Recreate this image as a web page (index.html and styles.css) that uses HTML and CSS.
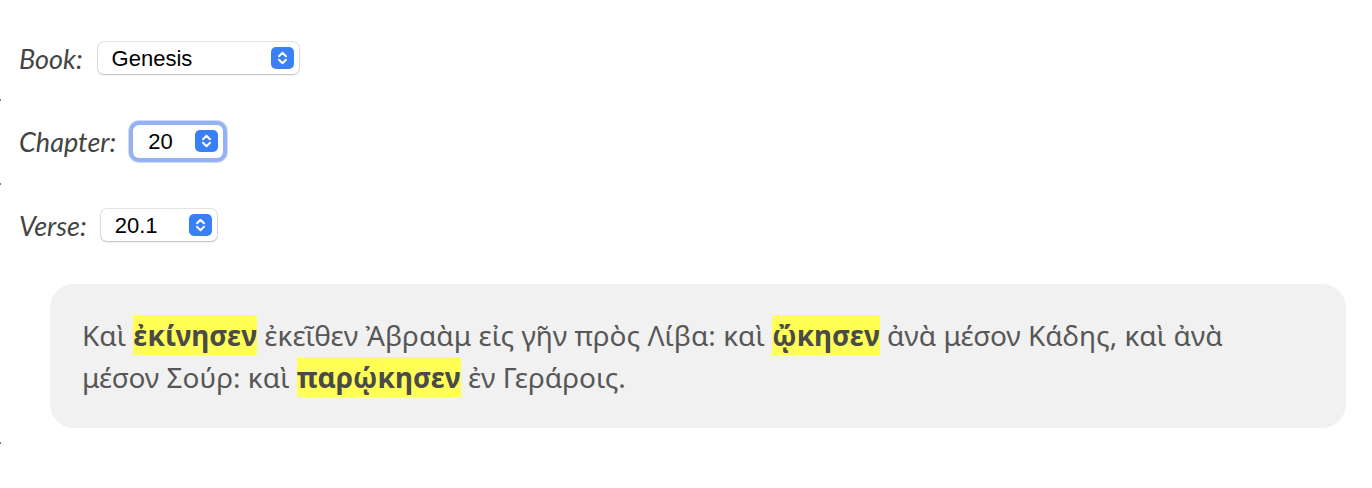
FILE: index.html
```html
<!DOCTYPE html>
<html lang="el">
<head>
<meta charset="utf-8">
<title>Verse viewer</title>
<link rel="stylesheet" href="styles.css">
</head>
<body>
<div class="page">
  <div class="row">
    <label class="lbl">Book:</label>
    <div class="sel sel-book">
      <select><option>Genesis</option></select>
      <svg class="arrows" width="23" height="22" viewBox="0 0 23 22"><rect width="23" height="22" rx="5" fill="#3a80f5"/><path d="M8 9.2 L11.5 5.8 L15 9.2 M8 12.8 L11.5 16.2 L15 12.8" fill="none" stroke="#fff" stroke-width="2" stroke-linecap="round" stroke-linejoin="round"/></svg>
    </div>
  </div>
  <div class="tick"></div>
  <div class="row">
    <label class="lbl">Chapter:</label>
    <div class="sel sel-chapter focus">
      <select><option>20</option></select>
      <svg class="arrows" width="23" height="22" viewBox="0 0 23 22"><rect width="23" height="22" rx="5" fill="#3a80f5"/><path d="M8 9.2 L11.5 5.8 L15 9.2 M8 12.8 L11.5 16.2 L15 12.8" fill="none" stroke="#fff" stroke-width="2" stroke-linecap="round" stroke-linejoin="round"/></svg>
    </div>
  </div>
  <div class="tick tick2"></div>
  <div class="row">
    <label class="lbl">Verse:</label>
    <div class="sel sel-verse">
      <select><option>20.1</option></select>
      <svg class="arrows" width="23" height="22" viewBox="0 0 23 22"><rect width="23" height="22" rx="5" fill="#3a80f5"/><path d="M8 9.2 L11.5 5.8 L15 9.2 M8 12.8 L11.5 16.2 L15 12.8" fill="none" stroke="#fff" stroke-width="2" stroke-linecap="round" stroke-linejoin="round"/></svg>
    </div>
  </div>
  <div class="verse">
    <p class="text">Καὶ <mark>ἐκίνησεν</mark> ἐκεῖθεν Ἀβραὰμ εἰς γῆν πρὸς Λίβα: καὶ <mark>ᾤκησεν</mark> ἀνὰ μέσον Κάδης, καὶ ἀνὰ μέσον Σούρ: καὶ <mark>παρῴκησεν</mark> ἐν Γεράροις.</p>
  </div>
  <div class="tick tick3"></div>
</div>
</body>
</html>
```

FILE: styles.css
```css
html, body {
  margin: 0;
  padding: 0;
  background: #ffffff;
}

.page {
  display: flex;
  flex-direction: column;
  align-items: flex-start;
  padding-top: 38px;
}

.row {
  display: flex;
  align-items: center;
  gap: 10px;
  height: 40px;
  margin-left: 19px;
}

.lbl {
  font-family: Lato, "Open Sans", sans-serif;
  font-style: italic;
  font-size: 27px;
  color: #444444;
}

.tick {
  width: 1px;
  height: 2px;
  background: #7a7a7a;
  margin: 21px 0 20px 0;
}

.tick2 {
  margin: 22px 0 20px 0;
}

.tick3 {
  margin: 14px 0 0 0;
}

.sel {
  position: relative;
  height: 32px;
  background: #ffffff;
  border-radius: 6px;
  box-shadow: 0 0 0 1px rgba(0, 0, 0, 0.10), 0 1px 2px rgba(0, 0, 0, 0.18);
  display: flex;
  align-items: center;
}

.sel select {
  appearance: none;
  -webkit-appearance: none;
  border: none;
  background: transparent;
  outline: none;
  font-family: "Liberation Sans", Arial, sans-serif;
  font-size: 22px;
  color: #000000;
  height: 100%;
  width: 100%;
  padding: 0 0 0 14px;
  margin: 0;
}

.arrows {
  position: absolute;
  right: 5px;
  top: 5px;
}

.sel-book {
  width: 201px;
  margin-left: 5px;
}

.sel-chapter {
  width: 90px;
  height: 33px;
  margin-left: 7px;
}

.sel-chapter select {
  padding-left: 15px;
}

.focus {
  box-shadow: 0 0 0 4px #94b2f1, 0 0 0 5px rgba(120, 150, 230, 0.35);
}

.sel-verse {
  width: 116px;
  margin-left: 4px;
}

.verse {
  align-self: stretch;
  margin: 39px 26px 0 50px;
  background: #f1f1f1;
  border-radius: 24px;
  padding: 30px 32px;
}

.text {
  margin: 0;
  max-width: 1175px;
  font-family: "Noto Sans", "Open Sans", sans-serif;
  font-size: 28px;
  line-height: 42px;
  color: #575757;
}

.text mark {
  background: #ffff55;
  color: #4a4a4a;
  font-weight: 700;
  padding: 1px 0;
}
```
